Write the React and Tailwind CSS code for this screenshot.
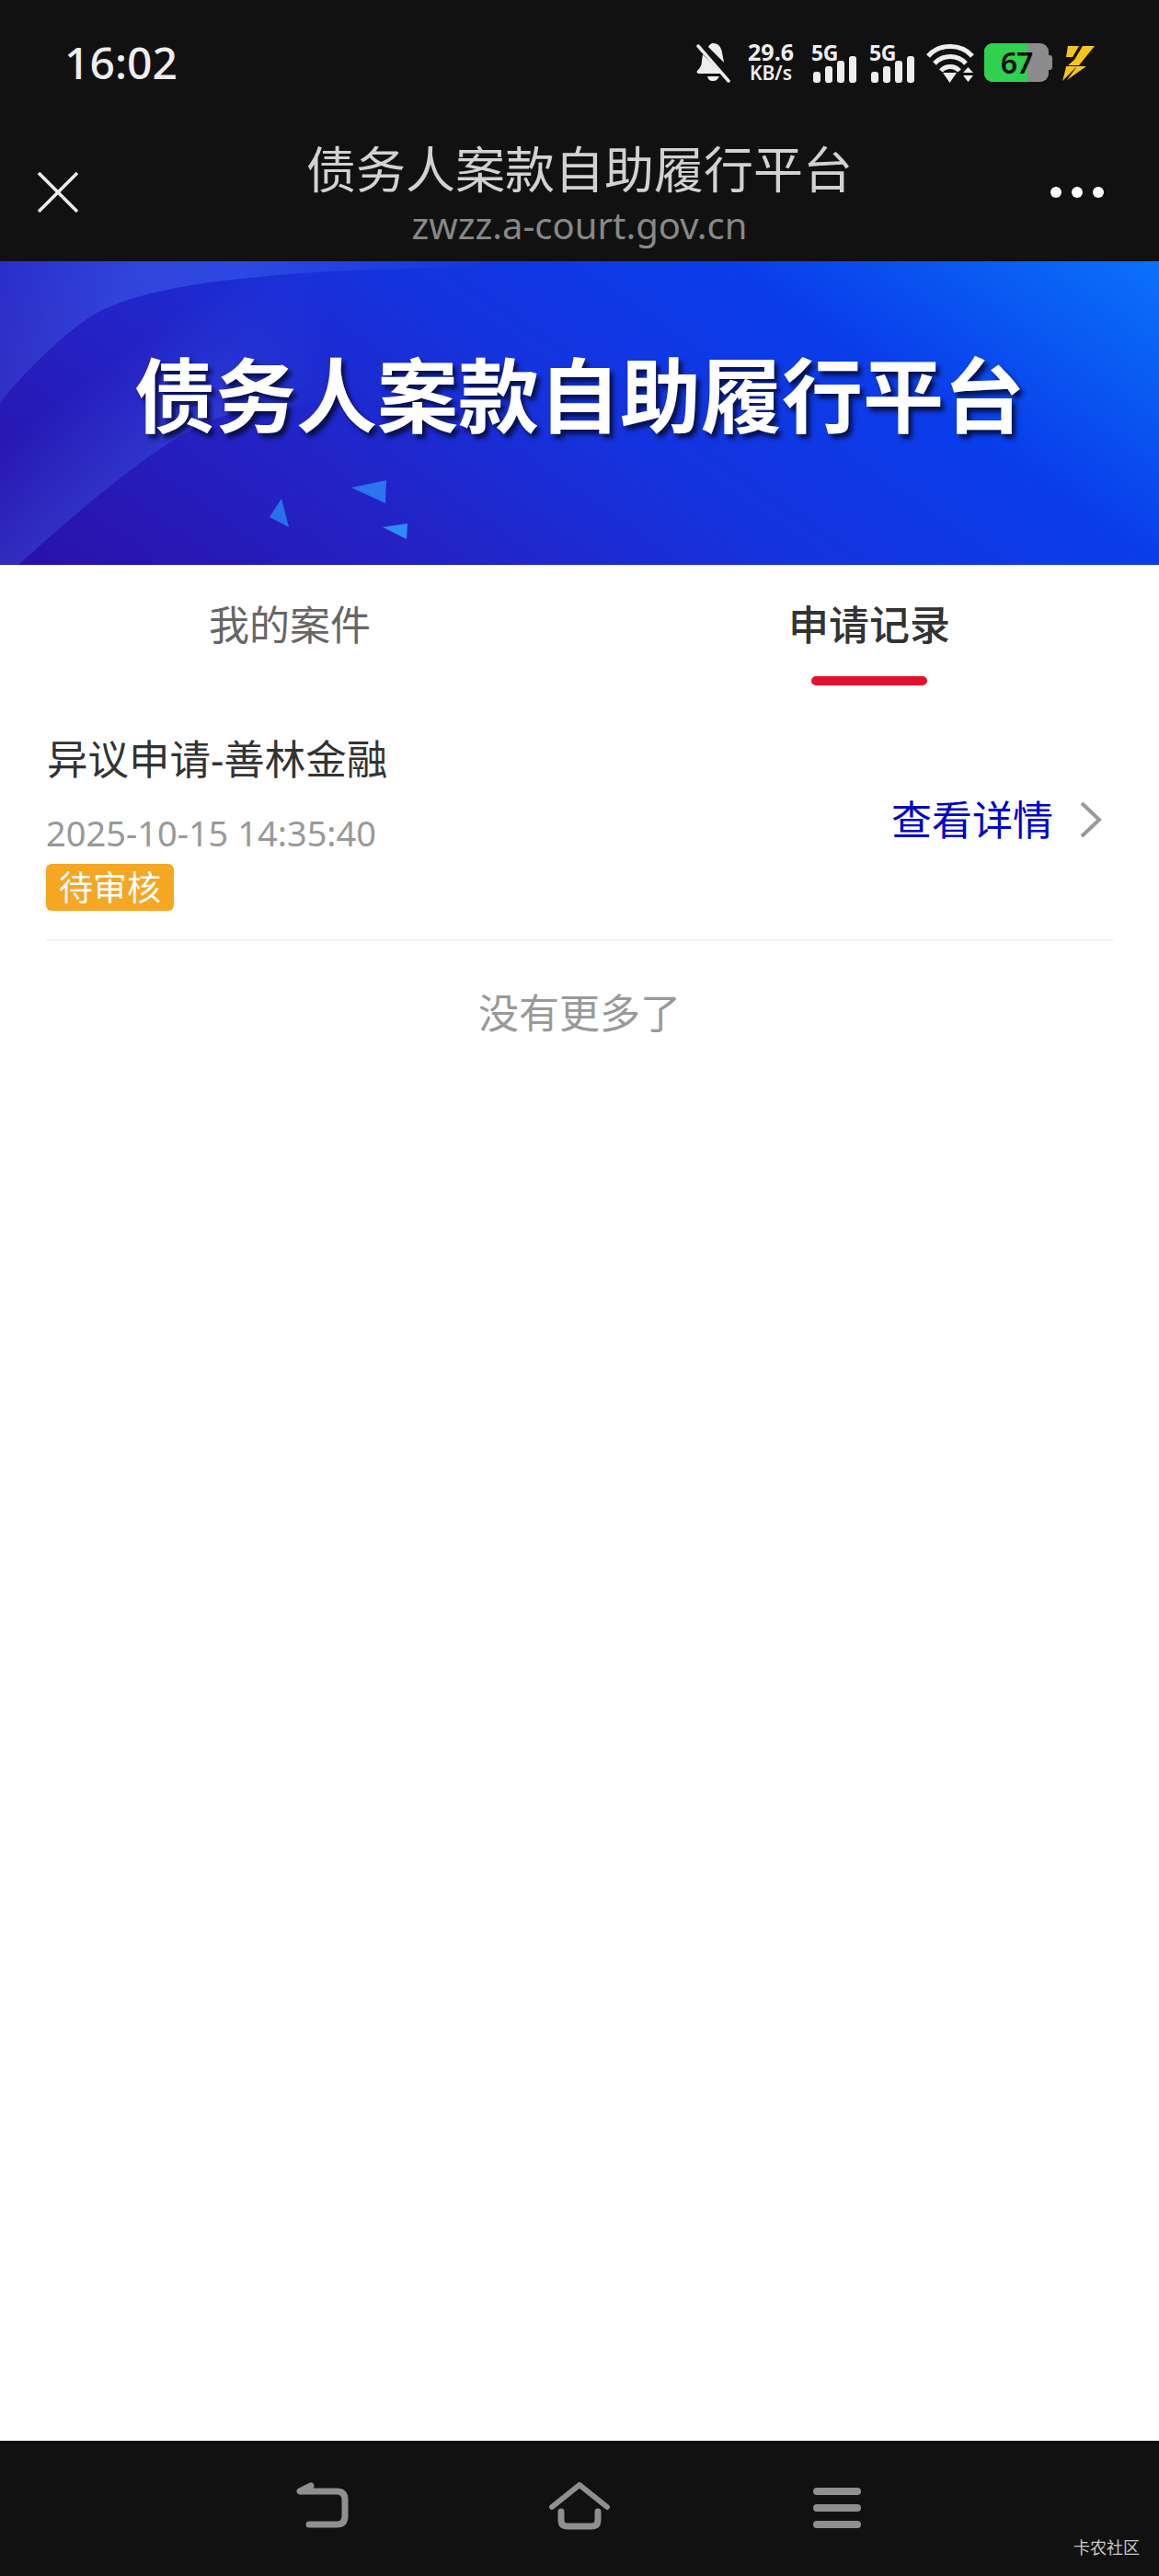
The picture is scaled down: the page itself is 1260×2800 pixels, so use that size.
export default function App() {
  return (
    <div className="flex h-[2800px] w-[1260px] flex-col overflow-hidden bg-white font-['Noto_Sans','Noto_Sans_CJK_SC',sans-serif]">
      <header className="h-[284px] shrink-0 bg-[#111111]">
        <StatusBar />
        <div className="grid h-[148px] grid-cols-[1fr_auto_1fr] items-start">
          <svg className="ml-[41px] mt-[51px] h-[44px] w-[44px]" viewBox="0 0 44 44" fill="none" stroke="#eeeeee" strokeWidth="3.6">
            <path d="M1 1 43 43M43 1 1 43" />
          </svg>
          <div className="flex flex-col items-center">
            <div className="mt-[16px] h-[64px] text-[54px] leading-[64px] text-[#d2d2d2]">债务人案款自助履行平台</div>
            <div className="mt-[6px] text-[40px] leading-[46px] text-[#888888]">zwzz.a-court.gov.cn</div>
          </div>
          <div className="mr-[60px] mt-[67px] flex justify-end gap-[11px]">
            <span className="h-[12px] w-[12px] rounded-full bg-white" />
            <span className="h-[12px] w-[12px] rounded-full bg-white" />
            <span className="h-[12px] w-[12px] rounded-full bg-white" />
          </div>
        </div>
      </header>

      <Banner />

      <nav className="grid h-[131px] shrink-0 grid-cols-2 pt-[39px]">
        <div className="text-center text-[44px] leading-[52px] text-[#666666]">我的案件</div>
        <div className="flex flex-col items-center">
          <div className="text-[44px] font-medium leading-[52px] text-[#333333]">申请记录</div>
          <div className="mt-[30px] h-[10px] w-[126px] rounded-full bg-[#e2122f]" />
        </div>
      </nav>

      <section className="mx-[50px] flex items-center justify-between border-b-2 border-[#f0f0f0] pb-[31px] pt-[54px]">
        <div className="flex flex-col items-start">
          <div className="ml-[1px] text-[44.500px] leading-[52px] text-[#333333]">异议申请-善林金融</div>
          <div className="mt-[30px] text-[38px] leading-[48px] text-[#999999]">2025-10-15 14:35:40</div>
          <div className="mt-[10px] flex h-[51px] w-[139px] items-center justify-center rounded-[6px] bg-[#f5a623] text-[37px] leading-[51px] text-white">待审核</div>
        </div>
        <div className="mb-[8px] mr-[12px] flex items-center gap-[28px]">
          <span className="text-[44px] leading-[52px] text-[#0000c8]">查看详情</span>
          <svg className="h-[40px] w-[25px]" viewBox="0 0 25 40" fill="none" stroke="#999999" strokeWidth="4">
            <path d="M3 2 22 20 3 38" />
          </svg>
        </div>
      </section>

      <div className="mt-[52px] text-center text-[44px] leading-[52px] text-[#999999]">没有更多了</div>

      <div className="flex-1" />

      <footer className="relative flex h-[147px] shrink-0 items-start bg-[#111111] pt-[45px]">
        <svg className="ml-[322px] h-[50px] w-[57px]" viewBox="0 0 57 50" fill="none" stroke="#8f8f8f" strokeWidth="7" strokeLinecap="round" strokeLinejoin="round">
          <path d="M16 4 4 10 44 10Q53 10 53 19L53 37Q53 46 44 46L14 46" />
        </svg>
        <svg className="ml-[218px] h-[52px] w-[66px]" viewBox="0 0 66 52" fill="none" stroke="#8f8f8f" strokeLinecap="round" strokeLinejoin="round">
          <path d="M3 27 33 3 63 27" strokeWidth="6" />
          <path d="M13 32V41Q13 48 20 48H46Q53 48 53 41V32" strokeWidth="7" />
        </svg>
        <div className="ml-[221px] mt-[6px] flex w-[52px] flex-col gap-[10px]">
          <span className="h-[8px] rounded-full bg-[#8f8f8f]" />
          <span className="h-[8px] rounded-full bg-[#8f8f8f]" />
          <span className="h-[8px] rounded-full bg-[#8f8f8f]" />
        </div>
        <span className="absolute bottom-[20px] right-[21px] text-[18px] leading-[22px] text-[#c8c8c8]">卡农社区</span>
      </footer>
    </div>
  );
}

function StatusBar() {
  return (
    <div className="relative flex h-[136px] items-start justify-between">
      <div className="ml-[70px] mt-[39px] text-[48px] font-medium leading-[58px] text-[#eeeeee]">16:02</div>
      <div className="mr-[70px] mt-[47px] flex items-start">
        <svg className="h-[43px] w-[37px]" viewBox="0 0 37 43">
          <path fill="#eeeeee" d="M18 0C24 0 27 4 28 10L30 21 13 4C14 2 16 0 18 0ZM7 12 27 33H2C1 33 0 31 1 30 4 27 6 24 6 19ZM12 36H25C23 40 21 41 18 41 15 41 13 40 12 36Z" />
          <path stroke="#eeeeee" strokeWidth="3.500" strokeLinecap="round" d="M2 3 35 41" />
        </svg>
        <div className="-mt-[2px] ml-[18px] flex w-[52px] flex-col items-center text-[#eeeeee]">
          <div className="text-[25px] font-bold leading-[23px]">29.6</div>
          <div className="text-[21px] font-semibold leading-[23px]">KB/s</div>
        </div>
        <Signal className="ml-[18px]" />
        <Signal className="ml-[13px]" />
        <svg className="ml-[12px] h-[43px] w-[52px]" viewBox="0 0 52 43" fill="none">
          <path stroke="#eeeeee" strokeWidth="5" d="M2 14C14 0 38 0 50 14M9 22C18 12 34 12 43 22M16 30C21 24 31 24 36 30" />
          <path fill="#eeeeee" d="M18 32H33L25.500 43ZM40 32 45.500 26 51 32ZM40 35H51L45.500 42Z" />
        </svg>
        <div className="relative ml-[11px] h-[42px] w-[70px] overflow-hidden rounded-[9px] bg-[#8c8c8c]">
          <div className="h-full w-[47px] bg-[#2fd14f]" />
          <span className="absolute inset-0 text-center text-[32px] font-semibold leading-[42px] tracking-[-1px] text-[#0a0a0a]">67</span>
        </div>
        <div className="mt-[13px] h-[16px] w-[4px] rounded-r-[3px] bg-[#8c8c8c]" />
        <svg className="ml-[11px] mt-[3px] h-[38px] w-[35px]" viewBox="0 0 35 38">
          <path fill="#f6c51c" d="M6 0H18L11 12 4 12ZM22 0H35L18 21 6 21 13 15ZM4 22H16L0 38 3 27ZM16 22 26 22 5 37Z" />
        </svg>
      </div>
    </div>
  );
}

function Signal({ className }) {
  return (
    <div className={"relative h-[43px] w-[50px] " + className}>
      <span className="absolute left-0 top-0 text-[23px] font-bold leading-[20px] tracking-[-0.5px] text-[#eeeeee]">5G</span>
      <div className="absolute bottom-0 left-[2px] flex items-end gap-[5px]">
        <span className="h-[12px] w-[8px] rounded-[3px] bg-[#eeeeee]" />
        <span className="h-[18px] w-[8px] rounded-[3px] bg-[#eeeeee]" />
        <span className="h-[24px] w-[8px] rounded-[3px] bg-[#eeeeee]" />
        <span className="h-[29px] w-[8px] rounded-[3px] bg-[#eeeeee]" />
      </div>
    </div>
  );
}

function Banner() {
  return (
    <div className="relative flex h-[330px] shrink-0 items-start justify-center overflow-hidden bg-[linear-gradient(35deg,#2a10a8_0%,#2422c4_27%,#1533de_50%,#0a3dea_73%,#0a72fa_100%)]">
      <svg className="absolute inset-0 h-[330px] w-[1260px]" viewBox="0 0 1260 330">
        <defs>
          <linearGradient id="w1" gradientUnits="userSpaceOnUse" x1="0" y1="0" x2="130" y2="60">
            <stop offset="0" stopColor="#5a8cff" stopOpacity="0.12" />
            <stop offset="1" stopColor="#5a8cff" stopOpacity="0.3" />
          </linearGradient>
          <linearGradient id="w2" gradientUnits="userSpaceOnUse" x1="130" y1="100" x2="230" y2="240">
            <stop offset="0" stopColor="#4a7cff" stopOpacity="0" />
            <stop offset="0.72" stopColor="#4a7cff" stopOpacity="0.28" />
          </linearGradient>
          <linearGradient id="f1" gradientUnits="userSpaceOnUse" x1="260" y1="0" x2="540" y2="0">
            <stop offset="0" stopColor="#ffffff" />
            <stop offset="1" stopColor="#000000" />
          </linearGradient>
          <linearGradient id="f2" gradientUnits="userSpaceOnUse" x1="220" y1="0" x2="360" y2="0">
            <stop offset="0" stopColor="#ffffff" />
            <stop offset="1" stopColor="#000000" />
          </linearGradient>
          <mask id="m1" maskUnits="userSpaceOnUse" x="0" y="0" width="1260" height="330">
            <rect width="1260" height="330" fill="url(#f1)" />
          </mask>
          <mask id="m2" maskUnits="userSpaceOnUse" x="0" y="0" width="1260" height="330">
            <rect width="1260" height="330" fill="url(#f2)" />
          </mask>
        </defs>
        <path mask="url(#m2)" fill="url(#w2)" d="M0 153C30 118 65 82 100 59 150 30 240 18 362 11L540 150C420 155 300 150 241 169 190 185 120 240 20 330H0Z" />
        <path mask="url(#m1)" fill="url(#w1)" d="M0 0V153C30 118 65 82 100 59 150 30 240 18 362 11 420 8 480 7 540 5V0Z" />
        <path fill="#2c74f0" d="M382 246 420 238 419 263Z" />
        <path fill="#2a6fec" d="M306 258 293 278 314 289Z" />
        <path fill="#2f8cf5" d="M416 289 443 285 442 302Z" />
      </svg>
      <div className="relative mt-[93px] text-[88px] font-bold leading-[104px] text-white [text-shadow:4px_5px_5px_rgba(5,10,50,0.85)]">债务人案款自助履行平台</div>
    </div>
  );
}
